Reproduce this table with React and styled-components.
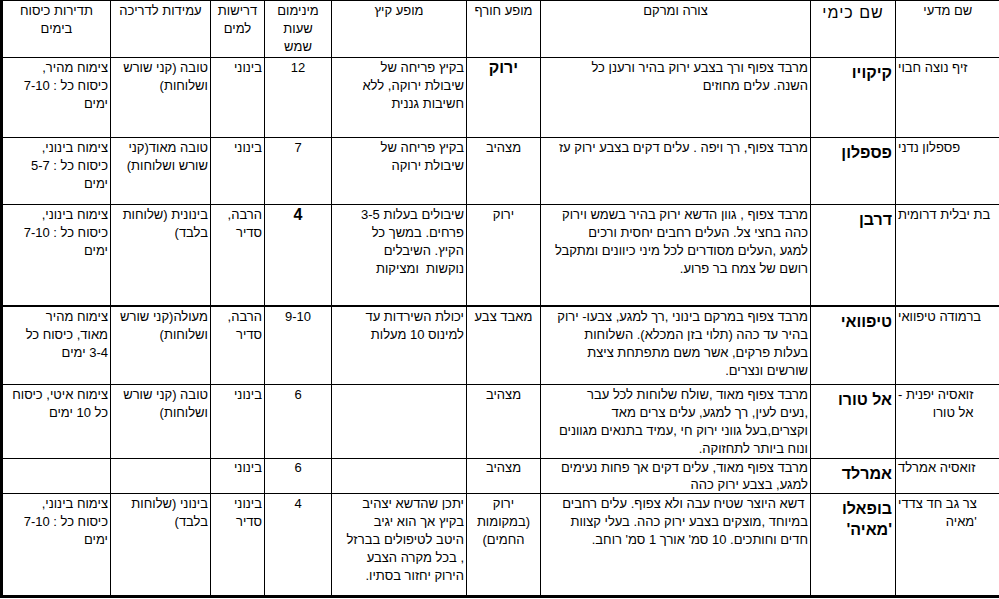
import React from 'react';
import styled, { createGlobalStyle } from 'styled-components';

const GlobalStyle = createGlobalStyle`
	html, body {
		margin: 0;
		padding: 0;
		background: #fff;
	}
	body {
		font-family: 'Liberation Sans', Arial, 'DejaVu Sans', sans-serif;
		color: #000;
	}
`;

const Sheet = styled.table`
	direction: rtl;
	width: 999px;
	table-layout: fixed;
	border-collapse: collapse;
	border-top: 1px solid #000;
	border-right: 2px solid #000;
	border-left: 3px solid #000;
	border-bottom: 3px solid #000;
	font-size: 13px;
	line-height: 18px;
`;

const Row = styled.tr`
	height: ${props => props.h}px;
	line-height: ${props => (props.compact ? '16.5px' : '18px')};
	border-bottom: ${props => (props.thick ? '2px' : '1px')} solid #000;
`;

const HeadCell = styled.th`
	border: 1px solid #000;
	font-weight: normal;
	text-align: center;
	vertical-align: top;
	white-space: pre-wrap;
	padding: 1px 2px 0;
	font-size: ${props => (props.big ? '16px' : '13px')};
	letter-spacing: ${props => (props.big ? '1px' : '0')};
	line-height: ${props => (props.big ? '21px' : '18px')};
`;

const Cell = styled.td`
	border: 1px solid #000;
	vertical-align: top;
	white-space: pre-wrap;
	padding: 1px 2px 0;
	text-align: ${props => props.align || 'right'};
	font-weight: ${props => (props.bold ? 'bold' : 'normal')};
	font-size: ${props => (props.bold ? '16px' : '13px')};
`;

const NameCell = styled.td`
	border: 1px solid #000;
	vertical-align: top;
	white-space: pre-wrap;
	padding: 4px 3px 0;
	text-align: right;
	font-weight: bold;
	font-size: 16px;
	line-height: 21px;
`;

const SciCell = styled.td`
	border: 1px solid #000;
	vertical-align: top;
	padding: 1px 2px 0;
	text-align: left;
`;

const SciText = styled.span`
	display: inline-block;
	white-space: pre;
	text-align: right;
`;

const columns = [
	{ title: 'שם מדעי', width: 105 },
	{ title: 'שם כימי', width: 85, big: true },
	{ title: 'צורה ומרקם', width: 270 },
	{ title: 'מופע חורף', width: 74 },
	{ title: 'מופע קיץ', width: 135 },
	{ title: 'מינימום\nשעות\nשמש', width: 67 },
	{ title: 'דרישות\nלמים', width: 54 },
	{ title: 'עמידות לדריכה', width: 100 },
	{ title: 'תדירות כיסוח\nבימים', width: 109 },
];

const grasses = [
	{
		h: 80,
		sci: 'זיף נוצה חבוי',
		name: 'קיקויו',
		form: 'מרבד צפוף ורך בצבע ירוק בהיר ורענן כל\nהשנה. עלים מחוזים',
		winter: 'ירוק',
		winterBold: true,
		summer: 'בקיץ פריחה של\nשיבולת ירוקה, ללא\nחשיבות גננית',
		sun: '12',
		water: 'בינוני',
		tread: 'טובה (קני שורש\nושלוחות)',
		mow: 'צימוח מהיר,\nכיסוח כל : 7-10\nימים',
	},
	{
		h: 67,
		sci: 'פספלון נדני',
		name: 'פספלון',
		form: 'מרבד צפוף, רך ויפה . עלים דקים בצבע ירוק עז',
		winter: 'מצהיב',
		summer: 'בקיץ פריחה של\nשיבולת ירוקה',
		sun: '7',
		water: 'בינוני',
		tread: 'טובה מאוד(קני\nשורש ושלוחות)',
		mow: 'צימוח בינוני,\nכיסוח כל : 5-7\nימים',
	},
	{
		h: 101,
		thick: true,
		sci: 'בת יבלית דרומית',
		name: 'דרבן',
		form: 'מרבד צפוף , גוון הדשא ירוק בהיר בשמש וירוק\nכהה בחצי צל. העלים רחבים יחסית ורכים\nלמגע ,העלים מסודרים לכל מיני כיוונים ומתקבל\nרושם של צמח בר פרוע.',
		winter: 'ירוק',
		summer: 'שיבולים בעלות 3-5\nפרחים. במשך כל\nהקיץ. השיבלים\nנוקשות  ומציקות',
		sun: '4',
		sunBold: true,
		water: 'הרבה,\nסדיר',
		tread: 'בינונית (שלוחות\nבלבד)',
		mow: 'צימוח בינוני,\nכיסוח כל : 7-10\nימים',
	},
	{
		h: 79,
		sci: 'ברמודה טיפוואי',
		name: 'טיפוואי',
		form: 'מרבד צפוף במרקם בינוני ,רך למגע, צבעו- ירוק\nבהיר עד כהה (תלוי בזן המכלא). השלוחות\nבעלות פרקים, אשר משם מתפתחת ציצת\nשורשים ונצרים.',
		winter: 'מאבד צבע',
		summer: 'יכולת השירדות עד\nלמינוס 10 מעלות',
		sun: '9-10',
		water: 'הרבה,\nסדיר',
		tread: 'מעולה(קני שורש\nושלוחות)',
		mow: 'צימוח מהיר\nמאוד, כיסוח כל\n3-4 ימים',
	},
	{
		h: 74,
		sci: 'זואסיה יפנית -\nאל טורו',
		name: 'אל טורו',
		form: 'מרבד צפוף מאוד ,שולח שלוחות לכל עבר\n,נעים לעין, רך למגע, עלים צרים מאד\nוקצרים,בעל גווני ירוק חי ,עמיד בתנאים מגוונים\nונוח ביותר לתחזוקה.',
		winter: 'מצהיב',
		summer: '',
		sun: '6',
		water: 'בינוני',
		tread: 'טובה (קני שורש\nושלוחות)',
		mow: 'צימוח איטי, כיסוח\nכל 10 ימים',
	},
	{
		h: 34,
		compact: true,
		sci: 'זואסיה אמרלד',
		name: 'אמרלד',
		form: 'מרבד צפוף מאוד, עלים דקים אך פחות נעימים\nלמגע, בצבע ירוק כהה',
		winter: 'מצהיב',
		summer: '',
		sun: '6',
		water: 'בינוני',
		tread: '',
		mow: '',
	},
	{
		h: 103,
		sci: "צר גב חד צדדי\n'מאיה",
		name: "בופאלו\n'מאיה'",
		form: " דשא היוצר שטיח עבה ולא צפוף. עלים רחבים\nבמיוחד ,מוצקים בצבע ירוק כהה. בעלי קצוות\nחדים וחותכים. 10 סמ' אורך 1 סמ' רוחב.",
		winter: 'ירוק\n(במקומות\nהחמים)',
		summer: 'יתכן שהדשא יצהיב\nבקיץ אך הוא יגיב\nהיטב לטיפולים בברזל\n, בכל מקרה הצבע\nהירוק יחזור בסתיו.',
		sun: '4',
		water: 'בינוני\nסדיר',
		tread: 'בינוני (שלוחות\nבלבד)',
		mow: 'צימוח בינוני,\nכיסוח כל : 7-10\nימים',
	},
];

function App() {
	return (
		<>
			<GlobalStyle />
			<Sheet dir='rtl'>
				<colgroup>
					{columns.map(col => (
						<col key={col.title} style={{ width: col.width }} />
					))}
				</colgroup>
				<thead>
					<Row h={57}>
						{columns.map(col => (
							<HeadCell key={col.title} big={col.big}>
								{col.title}
							</HeadCell>
						))}
					</Row>
				</thead>
				<tbody>
					{grasses.map(g => (
						<Row key={g.name} h={g.h} thick={g.thick} compact={g.compact}>
							<SciCell>
								<SciText>{g.sci}</SciText>
							</SciCell>
							<NameCell>{g.name}</NameCell>
							<Cell>{g.form}</Cell>
							<Cell align='center' bold={g.winterBold}>
								{g.winter}
							</Cell>
							<Cell>{g.summer}</Cell>
							<Cell align='center' bold={g.sunBold}>
								{g.sun}
							</Cell>
							<Cell>{g.water}</Cell>
							<Cell>{g.tread}</Cell>
							<Cell>{g.mow}</Cell>
						</Row>
					))}
				</tbody>
			</Sheet>
		</>
	);
}

export default App;
